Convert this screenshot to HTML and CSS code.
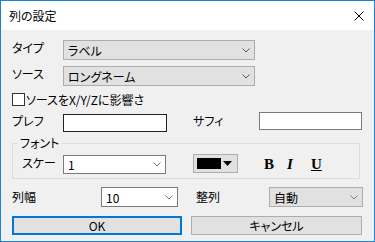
FILE: index.html
```html
<!DOCTYPE html>
<html lang="ja">
<head>
    <meta charset="UTF-8">
    <title>列の設定</title>
    <link rel="stylesheet" href="styles.css">
</head>
<body>
    <div class="window">
        <div class="titlebar">
            <span class="title">列の設定</span>
            <svg class="close" width="10" height="10" viewBox="0 0 10 10"><path d="M0.5 0.5L9.5 9.5M9.5 0.5L0.5 9.5" stroke="#000" stroke-width="1" fill="none"/></svg>
        </div>

        <div class="content">
            <!-- type -->
            <div class="row row-type">
                <span class="label label-main">タイプ</span>
                <div class="combo combo-gray combo-wide">
                    <span>ラベル</span>
                    <svg class="chev" width="8" height="5" viewBox="0 0 8 5"><polyline points="0.5,0.5 4,4 7.5,0.5" fill="none" stroke="#555" stroke-width="1"/></svg>
                </div>
            </div>

            <!-- source -->
            <div class="row row-source">
                <span class="label label-main">ソース</span>
                <div class="combo combo-gray combo-wide">
                    <span>ロングネーム</span>
                    <svg class="chev" width="8" height="5" viewBox="0 0 8 5"><polyline points="0.5,0.5 4,4 7.5,0.5" fill="none" stroke="#555" stroke-width="1"/></svg>
                </div>
            </div>

            <div class="row row-check">
                <span class="checkbox"></span>
                <span class="check-text">ソースをX/Y/Zに影響さ</span>
            </div>

            <!-- prefix / suffix -->
            <div class="row row-fix">
                <span class="label label-main">プレフ</span>
                <div class="textbox textbox-prefix"></div>
                <span class="label label-suffix">サフィ</span>
                <div class="textbox textbox-suffix"></div>
            </div>

            <!-- font group -->
            <div class="group">
                <span class="group-title">フォント</span>
                <span class="label label-scale">スケー</span>
                <div class="combo combo-white combo-scale">
                    <span>1</span>
                    <svg class="chev" width="8" height="5" viewBox="0 0 8 5"><polyline points="0.5,0.5 4,4 7.5,0.5" fill="none" stroke="#777" stroke-width="1"/></svg>
                </div>
                <div class="color-btn">
                    <span class="swatch"></span>
                    <svg width="9" height="5" viewBox="0 0 9 5"><polygon points="0,0 9,0 4.5,5" fill="#000"/></svg>
                </div>
                <span class="style-btn style-bold">B</span>
                <span class="style-btn style-italic">I</span>
                <span class="style-btn style-under">U</span>
            </div>

            <!-- width / align -->
            <div class="row row-width">
                <span class="label label-width">列幅</span>
                <div class="combo combo-white combo-colw">
                    <span>10</span>
                    <svg class="chev" width="8" height="5" viewBox="0 0 8 5"><polyline points="0.5,0.5 4,4 7.5,0.5" fill="none" stroke="#777" stroke-width="1"/></svg>
                </div>
                <span class="label label-align">整列</span>
                <div class="combo combo-gray combo-align">
                    <span>自動</span>
                    <svg class="chev" width="8" height="5" viewBox="0 0 8 5"><polyline points="0.5,0.5 4,4 7.5,0.5" fill="none" stroke="#777" stroke-width="1"/></svg>
                </div>
            </div>

            <div class="row row-buttons">
                <div class="button button-ok">OK</div>
                <div class="button button-cancel">キャンセル</div>
            </div>
        </div>
    </div>
</body>
</html>
```

FILE: styles.css
```css
body {
    margin: 0;
    font-family: "Noto Sans CJK JP", "Noto Sans", sans-serif;
    font-size: 12px;
    color: #000;
    font-feature-settings: "palt";
}
.window {
    width: 375px;
    height: 242px;
    box-sizing: border-box;
    border: 1px solid #1883d7;
    display: flex;
    flex-direction: column;
}
.titlebar {
    height: 29px;
    background-color: white;
    display: flex;
    align-items: center;
    justify-content: space-between;
    padding: 0 10px 0 8px;
}
.title {
    font-size: 12px;
    line-height: 14px;
}
.content {
    flex: 1;
    background-color: #f0f0f0;
    padding-left: 11px;
}
.row {
    display: flex;
    align-items: flex-start;
}
.label {
    line-height: 14px;
    white-space: nowrap;
}
.label-main {
    width: 51px;
    margin-top: 1px;
}
.row-type {
    margin-top: 10px;
}
.row-source {
    margin-top: 6px;
}
.combo {
    box-sizing: border-box;
    height: 20px;
    border: 1px solid #adadad;
    display: flex;
    align-items: center;
    justify-content: space-between;
    padding: 1px 4px 0 4px;
    line-height: 16px;
}
.combo-gray {
    background-color: #e1e1e1;
}
.combo-white {
    background-color: white;
    border-color: #7a7a7a;
}
.combo-wide {
    width: 192px;
}
.chev {
    margin-top: -1px;
}
.row-check {
    margin-top: 7px;
    align-items: center;
    height: 13px;
}
.checkbox {
    box-sizing: border-box;
    width: 13px;
    height: 13px;
    border: 1px solid #333;
    background-color: white;
    margin-right: 1px;
}
.check-text {
    line-height: 14px;
}
.row-fix {
    margin-top: 6px;
    height: 20px;
}
.row-fix .label {
    margin-top: 2px;
}
.textbox {
    box-sizing: border-box;
    height: 18px;
    background-color: white;
}
.textbox-prefix {
    width: 104px;
    margin-top: 2px;
    border: 1px solid #222;
}
.label-suffix {
    margin-left: 26px;
    width: 66px;
}
.textbox-suffix {
    width: 103px;
    border: 1px solid #7a7a7a;
}
.group {
    position: relative;
    box-sizing: border-box;
    width: 348px;
    height: 36px;
    margin-top: 11px;
    border: 1px solid #dcdcdc;
    display: flex;
    align-items: flex-start;
    padding: 10px 0 0 9px;
}
.group-title {
    position: absolute;
    left: 5px;
    top: -8px;
    padding: 0 2px;
    background-color: #f0f0f0;
    line-height: 14px;
}
.label-scale {
    width: 41px;
    margin-top: 2px;
}
.combo-scale {
    width: 103px;
    height: 19px;
    margin-top: 1px;
}
.color-btn {
    box-sizing: border-box;
    width: 45px;
    height: 19px;
    margin-left: 27px;
    border: 1px solid #adadad;
    background-color: #e1e1e1;
    display: flex;
    align-items: center;
    padding-left: 3px;
    gap: 2px;
}
.swatch {
    width: 24px;
    height: 11px;
    background-color: #000;
}
.style-btn {
    font-family: "Liberation Serif", serif;
    font-weight: bold;
    font-size: 15px;
    line-height: 19px;
    margin-top: 1px;
}
.style-bold {
    margin-left: 26px;
    width: 23px;
}
.style-italic {
    font-style: italic;
    width: 24px;
}
.style-under {
    text-decoration: underline;
}
.row-width {
    margin-top: 8px;
    align-items: center;
}
.label-width {
    width: 89px;
}
.combo-colw {
    width: 77px;
}
.label-align {
    margin-left: 18px;
    width: 73px;
}
.combo-align {
    width: 94px;
}
.row-buttons {
    margin-top: 9px;
    gap: 9px;
}
.button {
    box-sizing: border-box;
    height: 19px;
    background-color: #e1e1e1;
    border: 1px solid #adadad;
    text-align: center;
    line-height: 17px;
}
.button-ok {
    width: 170px;
    border: 2px solid #0078d7;
    line-height: 15px;
}
.button-cancel {
    width: 171px;
}
```
